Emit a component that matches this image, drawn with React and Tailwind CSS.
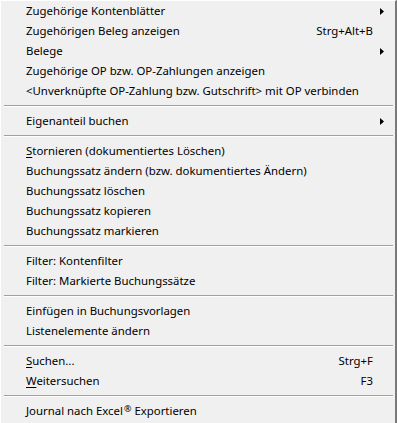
const groups = [
  [
    { label: 'Zugehörige Kontenblätter', submenu: true },
    { label: 'Zugehörigen Beleg anzeigen', shortcut: 'Strg+Alt+B' },
    { label: 'Belege', submenu: true },
    { label: 'Zugehörige OP bzw. OP-Zahlungen anzeigen' },
    { label: '<Unverknüpfte OP-Zahlung bzw. Gutschrift> mit OP verbinden' },
  ],
  [{ label: 'Eigenanteil buchen', submenu: true }],
  [
    { label: 'Stornieren (dokumentiertes Löschen)', mnemonic: 'S' },
    { label: 'Buchungssatz ändern (bzw. dokumentiertes Ändern)' },
    { label: 'Buchungssatz löschen' },
    { label: 'Buchungssatz kopieren' },
    { label: 'Buchungssatz markieren' },
  ],
  [
    { label: 'Filter: Kontenfilter' },
    { label: 'Filter: Markierte Buchungssätze' },
  ],
  [
    { label: 'Einfügen in Buchungsvorlagen' },
    { label: 'Listenelemente ändern' },
  ],
  [
    { label: 'Suchen...', mnemonic: 'S', shortcut: 'Strg+F' },
    { label: 'Weitersuchen', mnemonic: 'W', shortcut: 'F3' },
  ],
  [{ label: 'Journal nach Excel', reg: true }],
]

function Arrow() {
  return (
    <svg width="4" height="7" viewBox="0 0 4 7">
      <path d="M0 0 L4 3.5 L0 7 Z" fill="#000" />
    </svg>
  )
}

function Label({ item }) {
  if (item.reg) {
    return (
      <span>
        {item.label}
        <span className="text-[9px] relative -top-[3px] ml-[1px]">®</span> Exportieren
      </span>
    )
  }
  if (item.mnemonic) {
    return (
      <span>
        <span className="underline underline-offset-2">{item.label[0]}</span>
        {item.label.slice(1)}
      </span>
    )
  }
  return <span>{item.label}</span>
}

function MenuItem({ item }) {
  return (
    <div className="h-[20px] flex items-center pl-[25px] whitespace-nowrap">
      <Label item={item} />
      <span className="ml-auto">{item.shortcut}</span>
      <span className="w-[22px] flex items-center pl-[7px]">
        {item.submenu && <Arrow />}
      </span>
    </div>
  )
}

function Separator() {
  return (
    <div className="h-[10px] flex items-center pl-[3px] pr-[2px]">
      <div className="w-full border-t border-b border-t-[#a0a0a0] border-b-white" />
    </div>
  )
}

export default function App() {
  return (
    <div
      className="w-[397px] h-[423px] bg-[#f0f0f0] text-black text-[11.4px] border-t border-l border-t-white border-l-white border-r-2 border-r-[#7a7a7a] overflow-hidden"
      style={{ fontFamily: '"Noto Sans", "Liberation Sans", sans-serif' }}
    >
      {groups.map((group, i) => (
        <div key={i}>
          {i > 0 && <Separator />}
          {group.map((item) => (
            <MenuItem key={item.label} item={item} />
          ))}
        </div>
      ))}
    </div>
  )
}
